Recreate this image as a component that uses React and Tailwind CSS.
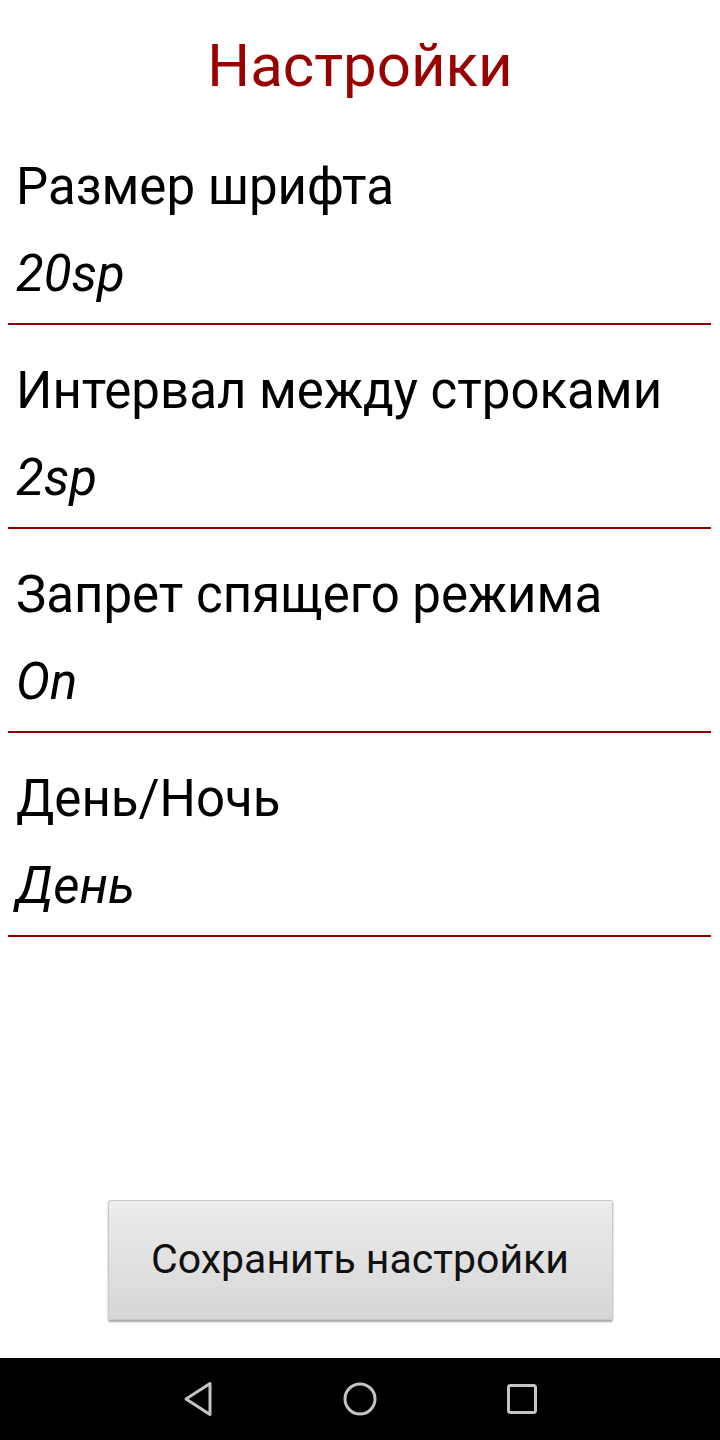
const settings = [
  { label: 'Размер шрифта', value: '20sp' },
  { label: 'Интервал между строками', value: '2sp' },
  { label: 'Запрет спящего режима', value: 'On' },
  { label: 'День/Ночь', value: 'День' },
];

function NavBar() {
  return (
    <div className="h-[82px] bg-black flex items-center justify-center gap-[128px]">
      {/* back */}
      <svg width="32" height="36" viewBox="0 0 32 36" fill="none" stroke="#c4c4c4" strokeWidth="3" strokeLinejoin="round">
        <path d="M28 2.5 L4 18 L28 33.5 Z" />
      </svg>
      {/* home */}
      <svg width="36" height="36" viewBox="0 0 36 36" fill="none" stroke="#c4c4c4" strokeWidth="3">
        <circle cx="18" cy="18" r="15" />
      </svg>
      {/* recents */}
      <svg width="32" height="32" viewBox="0 0 32 32" fill="none" stroke="#c4c4c4" strokeWidth="3">
        <rect x="2.5" y="2.5" width="27" height="27" rx="2" />
      </svg>
    </div>
  );
}

export default function App() {
  return (
    <div className="w-[720px] h-[1440px] flex flex-col bg-white text-black font-['Roboto',sans-serif]">
      <div className="h-[121px] pt-[30px]">
        <h1 className="text-center text-[60px] leading-[72px] text-[#990000]">Настройки</h1>
      </div>

      <div className="ml-[8px] mr-[9px]">
        {settings.map((s) => (
          <div key={s.label} className="pt-[34px] pb-[17px] border-b-2 border-[#8b0000]">
            <div className="pl-[8px] text-[51px] leading-[64px]">{s.label}</div>
            <div className="pl-[8px] mt-[23px] text-[51px] leading-[64px] italic">{s.value}</div>
          </div>
        ))}
      </div>

      <div className="flex-1 flex flex-col justify-end items-center pb-[38px]">
        <button className="w-[505px] h-[120px] bg-gradient-to-b from-[#ececec] to-[#d6d6d6] border border-[#c9c9c9] rounded-[2px] shadow-[0_2px_2px_rgba(0,0,0,0.35)] text-[41px] text-[#111]">
          Сохранить настройки
        </button>
      </div>

      <NavBar />
    </div>
  );
}
